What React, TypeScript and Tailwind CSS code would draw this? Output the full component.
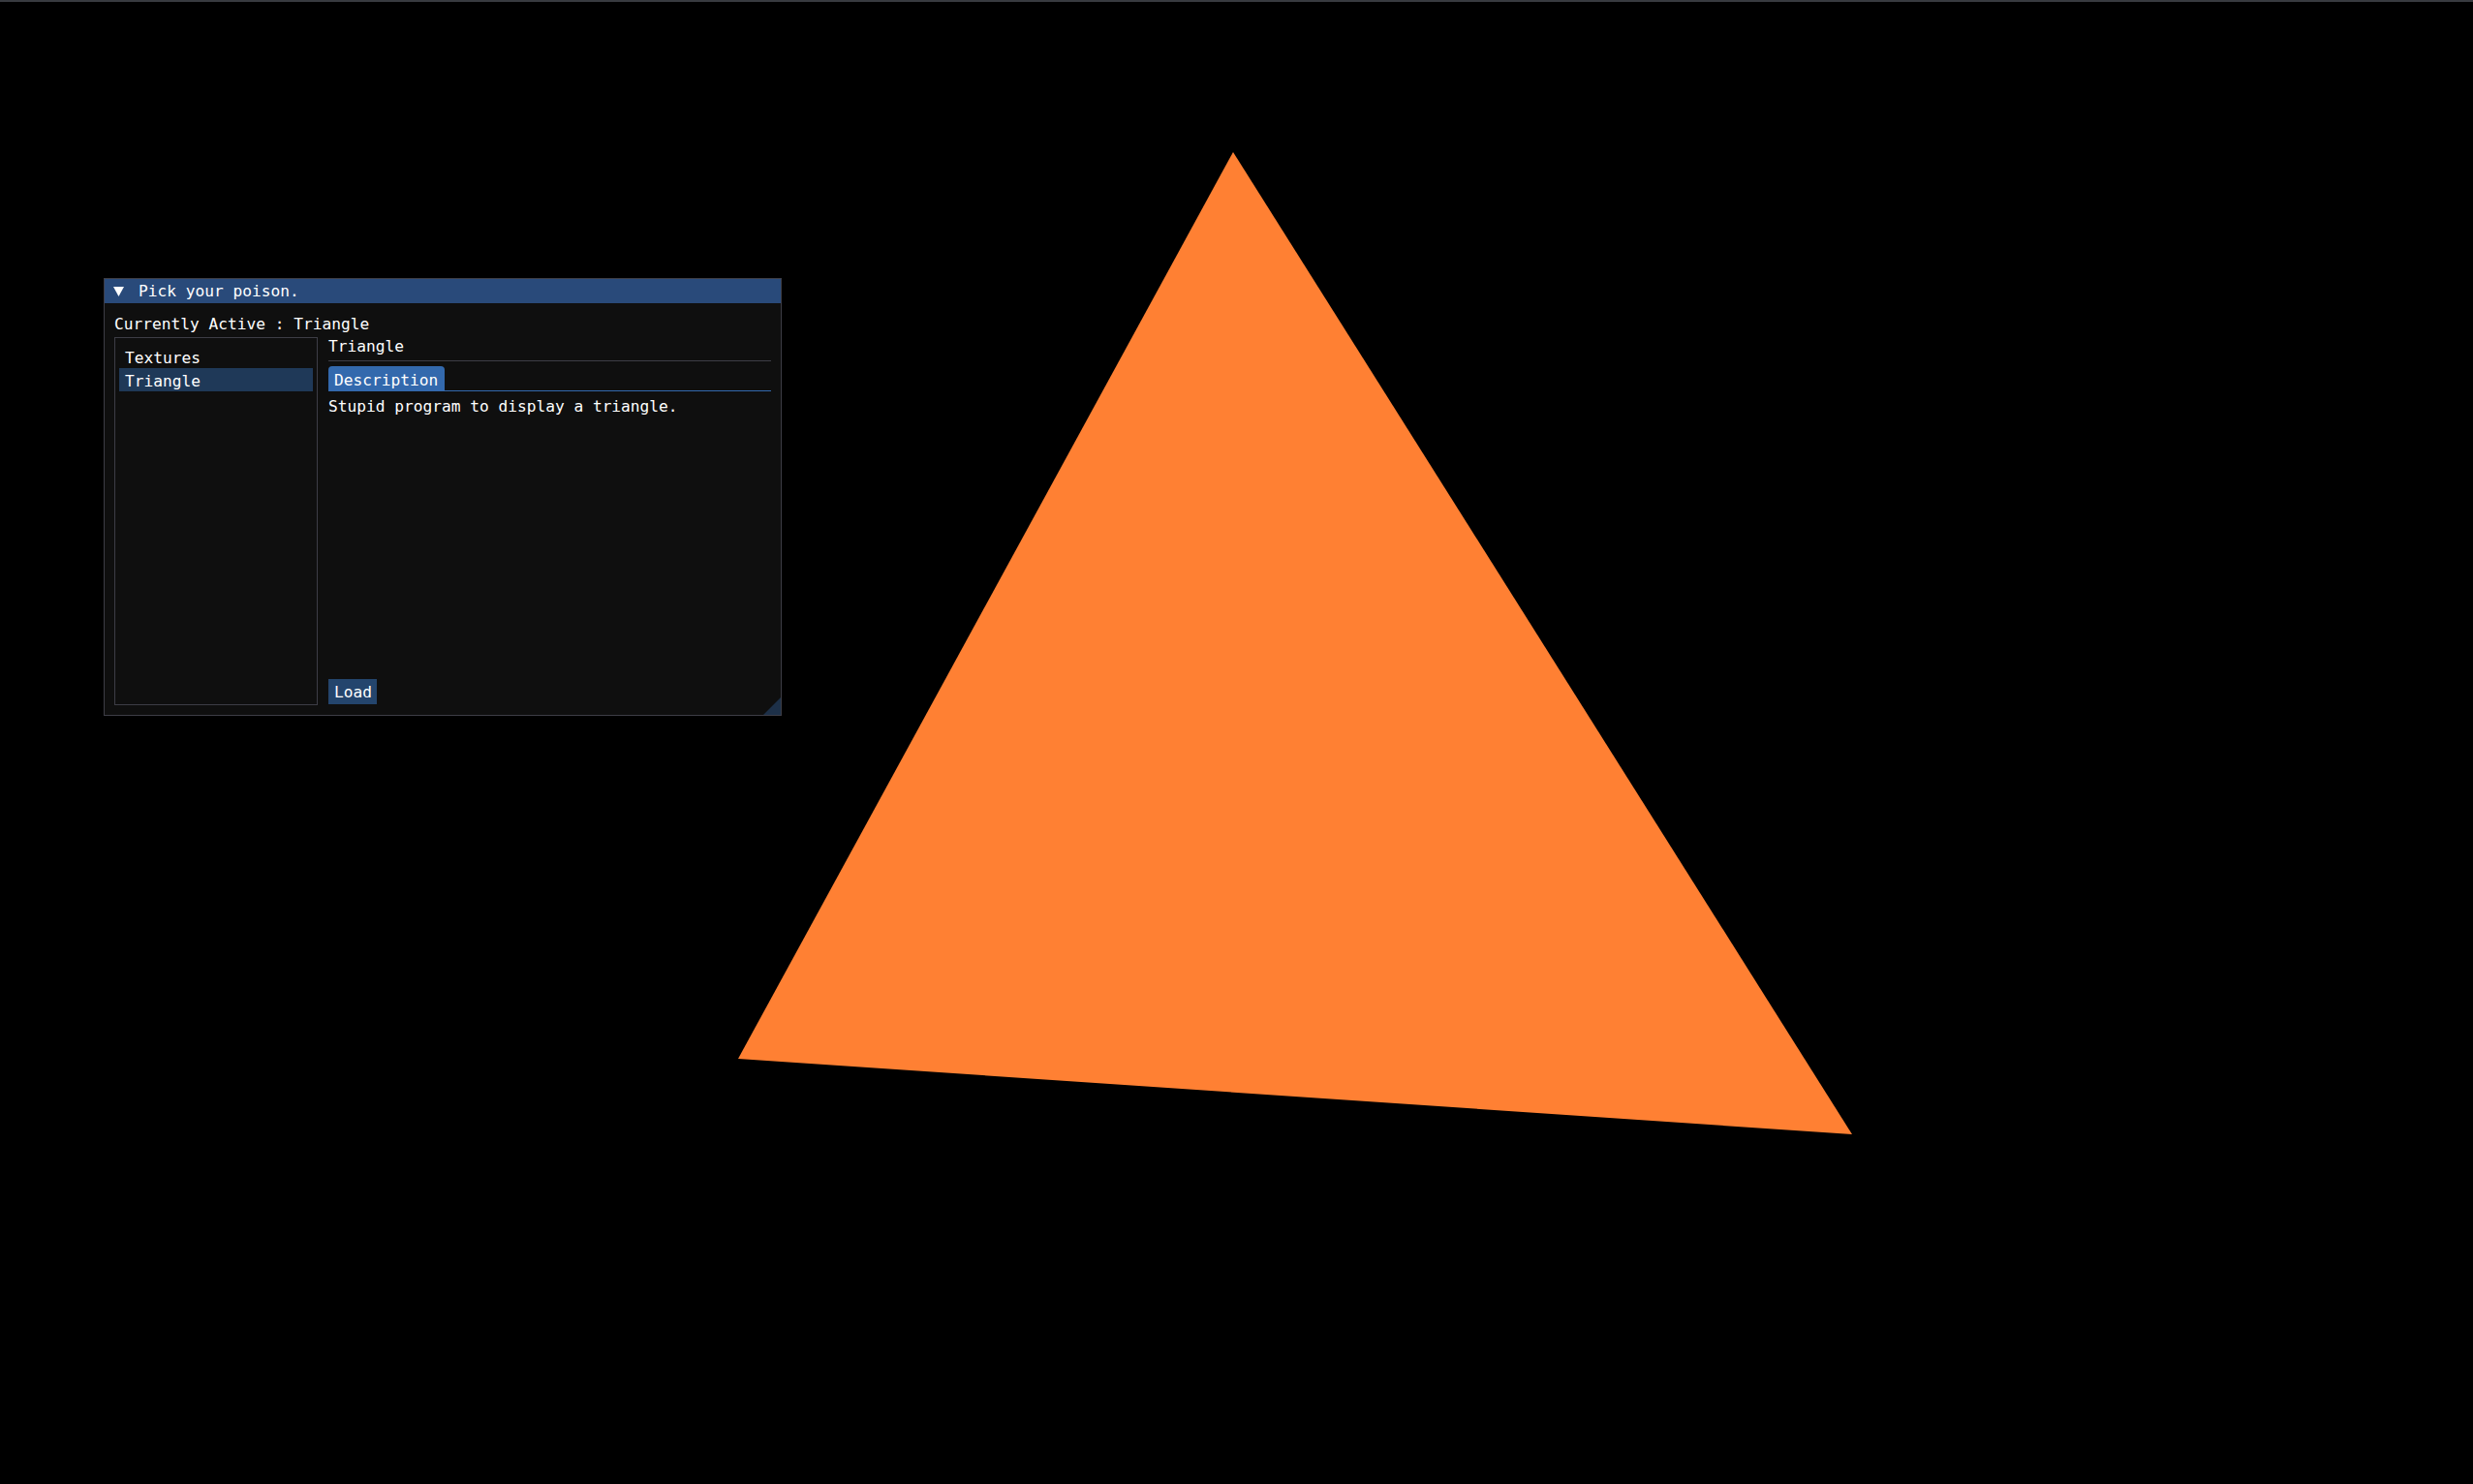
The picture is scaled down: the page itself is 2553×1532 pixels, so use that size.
export default function App() {
  return (
    <div className="relative w-[2553px] h-[1532px] bg-black overflow-hidden font-['DejaVu_Sans_Mono','Liberation_Mono',monospace] text-[16.2px] leading-[19px] text-white">
      <div className="h-[2px] bg-[#383b40]" />
      <svg className="absolute left-0 top-0" width={2553} height={1532}>
        <polygon points="1273,157 762,1093 1912,1171" fill="#ff8033" />
      </svg>

      <div className="absolute left-[107px] top-[287px] w-[700px] h-[452px] border border-[#3d3d46] bg-[#0f0f0f] flex flex-col">
        <div className="h-[25px] shrink-0 bg-[#294a7a] flex items-center pl-[9px]">
          <svg width={11} height={10} className="shrink-0">
            <polygon points="0,0 11,0 5.5,10" fill="#ffffff" />
          </svg>
          <span className="ml-[15px] whitespace-pre">Pick your poison.</span>
        </div>

        <div className="flex-1 flex flex-col pt-[12px] px-[10px] pb-[10px] min-h-0">
          <div className="h-[19px] whitespace-pre">Currently Active : Triangle</div>
          <div className="mt-[4px] flex flex-1 gap-[11px] min-h-0">
            <div className="w-[210px] shrink-0 border border-[#3d3d46] pt-[7px] px-[4px] flex flex-col">
              <div className="h-[24px] pt-[4px] pl-[6px]">Textures</div>
              <div className="h-[24px] pt-[4px] pl-[6px] bg-[#1f3958]">Triangle</div>
            </div>

            <div className="flex-1 flex flex-col">
              <div className="h-[19px]">Triangle</div>
              <div className="mt-[5px] h-[1px] bg-[#3d3d46]" />
              <div className="mt-[5px] flex">
                <div className="h-[25px] pt-[5px] pl-[6px] pr-[7px] bg-[#3369ad] rounded-t-[4px]">Description</div>
              </div>
              <div className="h-[1px] bg-[#3369ad]" />
              <div className="mt-[6px] h-[19px] whitespace-pre">Stupid program to display a triangle.</div>
              <div className="flex-1" />
              <div className="flex mb-[1px]">
                <div className="h-[26px] pt-[4px] pl-[6px] pr-[5px] bg-[#24456d]">Load</div>
              </div>
            </div>
          </div>
        </div>

        <svg width={18} height={18} className="absolute right-0 bottom-0">
          <polygon points="18,0 18,18 0,18" fill="#1d3048" />
        </svg>
      </div>
    </div>
  );
}
